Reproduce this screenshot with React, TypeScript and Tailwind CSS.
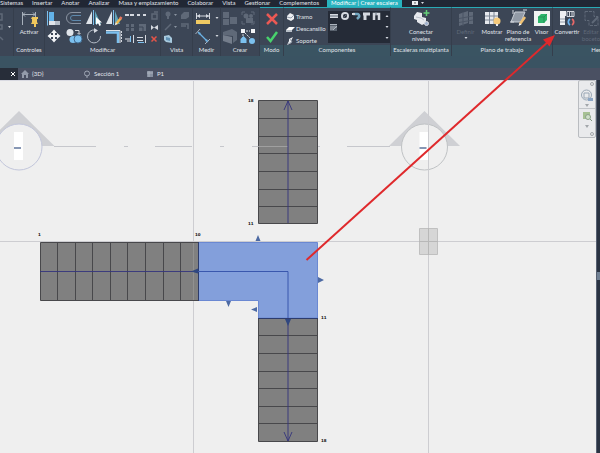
import type { ReactNode } from 'react'

const TABS = ['Insertar', 'Anotar', 'Analizar', 'Masa y emplazamiento', 'Colaborar', 'Vista', 'Gestionar', 'Complementos']

const W = '#d5d9e0'
const DIM = '#5f6978'
const BLUE = '#7cc0ee'
const INK = '#34347c'

function Svg({ w = 18, h = 18, children }: { w?: number; h?: number; children: ReactNode }) {
  return <svg width={w} height={h} viewBox={`0 0 ${w} ${h}`} fill="none" className="block shrink-0" aria-hidden="true">{children}</svg>
}

function Caret({ dim = false, up = false }: { dim?: boolean; up?: boolean }) {
  return <Svg w={4} h={4}><path d={up ? 'M.5 3h3L2 1z' : 'M.5 1h3L2 3z'} fill={dim ? DIM : W} /></Svg>
}

const MODIFY: Record<string, ReactNode> = {
  Alinear: <Svg><path d="M4 3h5v9H4z" fill="#62b2e8" /><path d="M4 12h11v4H4z" fill="#dfe4ea" /><path d="M10 12h5v4h-5z" fill="#b4bdc8" /><path d="M2.500 2v14.500" stroke={BLUE} /></Svg>,
  Desfase: <Svg><path d="M16 3.500H7a5.500 5.500 0 0 0 0 11h9" stroke="#8b94a2" /><path d="M16 6.500H8a2.500 2.500 0 0 0 0 5h8" stroke="#5e89ad" /></Svg>,
  'Reflejar eje': <Svg><path d="M7 2v13H1z" fill="#dfe4ea" /><path d="M10 2v13h6z" fill="#5fa3b8" /><path d="M8.500 1v15" stroke={BLUE} /><path d="M11 8v8l2-2 1.500 3 1.500-1-1.500-2.500H17z" fill="#fff" /></Svg>,
  'Reflejar dibujo': <Svg><path d="M7 2v13H1z" fill="#dfe4ea" /><path d="M10 2v13h5z" fill="#5fa3b8" /><path d="M8.500 1v15" stroke={BLUE} /><path d="m11 15 5-6" stroke="#eeb94e" strokeWidth="2.500" /><path d="m15 10 1.500-2" stroke="#e87561" strokeWidth="2.500" /><path d="m9.500 16.500 1.500-3 1.500 1.500z" fill="#eee" /></Svg>,
  Mover: <Svg><path d="M9 2.500 6 6h2v2H6V6L2.500 9 6 12v-2h2v2H6l3 3.500 3-3.500h-2v-2h2v2l3.500-3L12 6v2h-2V6h2z" fill="#f2f4f7" /></Svg>,
  Copiar: <Svg><circle cx="5" cy="5.500" r="3.500" fill="#dfe4ea" /><path d="M10 3.500h4V7m-1.500-1L14 7.500 15.500 6" stroke={W} /><circle cx="8" cy="12.500" r="3.500" fill={BLUE} /><circle cx="13" cy="12" r="4" fill={BLUE} stroke="#416b91" /></Svg>,
  Rotar: <Svg><path d="M10 3a6.500 6.500 0 1 0 5.500 6" stroke="#b4bcc7" /><path d="m9 1 4 2.500L9 6z" fill={W} /></Svg>,
  Recortar: <Svg><path d="M1 5.500h12V16" stroke={BLUE} strokeWidth="2.500" /><path d="M1 3.500h14V16" stroke="#dfe4ea" /><path d="M16.500 4v12" stroke={W} strokeDasharray="2 1" /></Svg>,
}

const SMALL: [string, ReactNode][] = [
  ['Dividir', <><path d="M1 6h4m1 0h4" stroke={W} strokeWidth="2" /></>],
  ['Dividir con hueco', <><path d="M1 6h3m3 0h3" stroke={W} strokeWidth="2" /></>],
  ['Desbloquear', <><path d="M4 5h5v5H4zM6 3h4" stroke={DIM} strokeWidth="1.500" /></>],
  ['Matriz', <><path d="M2 3h3v3H2zm5 0h3v3H7zM2 7h3v3H2zm5 0h3v3H7z" fill={DIM} /></>],
  ['Escala', <><path d="M3 3h7v7H3z" fill={DIM} /><path d="M3 6h4v4" stroke="#3c4656" /></>],
  ['Bloquear', <><path d="M3 4v5l3-2.500zM10 4v5L6 6.500z" fill={W} /></>],
  ['Alargar uno', <><path d="M1 6h5M3 8h4M9.500 2v8" stroke={W} /><path d="M6.500 3v6" stroke={BLUE} /></>],
  ['Alargar varios', <><path d="M1 4.500h6M1 7.500h6M9.500 2v8" stroke={W} /><path d="M2 9.500h6" stroke={BLUE} /></>],
  ['Suprimir', <><path d="m3.500 3.500 5 5m0-5-5 5" stroke="#e45449" strokeWidth="1.500" /></>],
]

function Panel({ label, className, context = false, children }: { label: string; className: string; context?: boolean; children: ReactNode }) {
  return (
    <section className={`flex flex-col border-r border-[#353e4c] ${context ? 'border-t border-t-[#29a9b4]' : 'border-t border-t-[#2c3543]'} ${className}`}>
      <div className="flex h-[37px] pt-px">{children}</div>
      <h2 className={`h-[11px] text-center leading-[10px] ${context ? 'bg-[#3a5462]' : ''}`}>{label}</h2>
    </section>
  )
}

function Tool({ lines, className, dim = false, children }: { lines: string[]; className: string; dim?: boolean; children: ReactNode }) {
  return (
    <button type="button" className={`flex shrink-0 flex-col items-center leading-[7px] ${dim ? 'text-[#5f6978]' : ''} ${className}`}>
      {children}
      <span className="flex flex-col items-center pt-px">
        {lines.map((l) => <span key={l} className="whitespace-nowrap">{l}</span>)}
      </span>
    </button>
  )
}

function Ribbon() {
  return (
    <div className="flex overflow-hidden bg-[#3c4656]">
      <div className="w-[14px] shrink-0 border-r border-t border-[#353e4c] border-t-[#2c3543] pt-1">
        <Svg w={12} h={34}><path d="M0 2h2v6H0m0 5h2v4H0m0 8 3 3" stroke={DIM} strokeWidth="1.500" /><path d="M8 14h3l-1.500 2z" fill={W} /></Svg>
      </div>
      <Panel label="Controles" className="w-[31px] shrink-0">
        <Tool lines={['Activar']} className="w-[30px]">
          <Svg><path d="M2.500 3v13M15.500 3v5M3 5.500h12M5 3.500l-2 2 2 2m8-4 2 2-2 2" stroke="#a7b0bb" /><path d="M12 8h6v2h-1v3l1 2h-7l1-2v-3h-1zM14 15h2v3h-2z" fill="#efc75c" /></Svg>
        </Tool>
      </Panel>
      <Panel label="Modificar" className="w-[116px] shrink-0">
        <div className="grid grid-cols-4 content-start gap-x-px">
          {Object.entries(MODIFY).map(([k, icon]) => <button key={k} type="button" aria-label={k} className="w-[19px]">{icon}</button>)}
        </div>
        <div className="grid grid-cols-3 content-start">
          {SMALL.map(([k, icon]) => <button key={k} type="button" aria-label={k}><Svg w={12} h={12}>{icon}</Svg></button>)}
        </div>
      </Panel>
      <Panel label="Vista" className="w-[32px] shrink-0">
        <button type="button" aria-label="Opciones de vista" className="self-start">
          <Svg w={31} h={36}>
            <circle cx="7" cy="5" r="2.500" fill={DIM} /><path d="M6 7h2v3H6z" fill={DIM} /><path d="M13 5h3l-1.500 2zM13 17h3l-1.500 2z" fill="#8a93a0" />
            <path d="m20 6 3-3h5v5l-3 2h-5z" fill={DIM} /><path d="m4 21 6-6M20 15h7v5m-7-3h5" stroke={DIM} strokeWidth="1.500" />
            <path d="m3 27 5-1 3 3v5l-6-1-2-2z" fill="#a7c9de" /><path d="m5 28 4 1v3l-4-1z" fill="#5f91b4" />
          </Svg>
        </button>
      </Panel>
      <Panel label="Medir" className="w-[28px] shrink-0">
        <div className="flex flex-col">
          <button type="button" aria-label="Medir distancia" className="flex items-center gap-[3px] pl-px">
            <Svg><path d="M2.500 4v6m13-6v6M3 7h12" stroke={W} /><path d="m6 5-3 2 3 2zm6 0 3 2-3 2z" fill={W} /><path d="M2 11h14v4H2z" fill="#f0ca62" /></Svg><Caret />
          </button>
          <button type="button" aria-label="Cota alineada" className="flex items-center gap-[3px] pl-px">
            <Svg><path d="m4 5 10 10" stroke="#6cb2e4" strokeWidth="1.200" /><path d="M1.500 7 6 2m5 15 5-5" stroke="#a9b2bd" /><path d="m4 5 3 1-2 2zm10 10-3-1 2-2z" fill="#6cb2e4" /></Svg><Caret />
          </button>
        </div>
      </Panel>
      <Panel label="Crear" className="w-[39px] shrink-0">
        <div className="grid grid-cols-2 content-start">
          <button type="button" aria-label="Crear ensamblaje"><Svg><path d="M2 3h6v6H2zM2 10h6v6H2zM9 8h7v7H9z" fill={DIM} /></Svg></button>
          <button type="button" aria-label="Crear piezas"><Svg><path d="M3 6V3h3m6 0h3v3m0 6v3h-3m-6 0H3v-3" stroke={DIM} /><circle cx="7" cy="7" r="2.500" fill={DIM} /><path d="M7 9h7v5H7z" fill={DIM} /><circle cx="12" cy="7" r="2" fill={DIM} /></Svg></button>
          <button type="button" aria-label="Crear grupo"><Svg><path d="m2 5 9-3 5 3v8l-4 3V9L2 8z" fill={DIM} /><path d="m2 8 9 2v7l-9-3z" fill="#747d8b" /></Svg></button>
          <button type="button" aria-label="Crear similar"><Svg><path d="M2 2h4v4H2zM12 2h4v4h-4z" fill="#f2f4f7" /><path d="M7 4h4M6 6l5 5M4 7v4" stroke={W} strokeDasharray="2 1" /><path d="m4.500 9 3 3v4h-6v-4z" fill={BLUE} /><circle cx="13" cy="14" r="3" fill={BLUE} /></Svg></button>
        </div>
      </Panel>
      <Panel label="Modo" context className="w-[24px] shrink-0">
        <div className="flex flex-col pl-[3px]">
          <button type="button" aria-label="Cancelar"><Svg><path d="m4 5 10 10m0-10L4 15" stroke="#ec5954" strokeWidth="2.500" /></Svg></button>
          <button type="button" aria-label="Finalizar"><Svg><path d="m4 10 3.500 4L14 5" stroke="#48d26d" strokeWidth="2.500" /></Svg></button>
        </div>
      </Panel>
      <Panel label="Componentes" context className="w-[107px] shrink-0">
        <div className="flex w-[44px] shrink-0 flex-col pl-px text-left">
          <button type="button" className="flex h-3 items-center gap-px pt-[3px]"><Svg w={10} h={10}><path d="M2 4 5 1l4 2v4L6 9 2 7z" fill="#eef0f3" /><path d="m2 5 4 1 3-3" stroke="#929cab" /></Svg>Tramo</button>
          <button type="button" className="flex h-3 items-center gap-px pt-[3px]"><Svg w={10} h={10}><path d="m1 6 3-3h6L7 6z" fill="#fff" /><path d="M1 6h6v2H1z" fill="#b7bec7" /></Svg>Descansillo</button>
          <button type="button" className="flex h-3 items-center gap-px pt-[3px]"><Svg w={10} h={10}><path d="M8 1 4 3v2L2 9l4-2V5z" fill="#eef0f3" /><path d="m5 3 2 3-4 2" stroke="#9ca6b3" /></Svg>Soporte</button>
        </div>
        <div className="mt-[2px] flex h-8 w-[62px] justify-between bg-[#252b37] pr-px">
          <Svg w={54} h={20}>
            <path d="M2 3h8v4H2z" fill={W} /><path d="M2 5h8" stroke="#5f6876" />
            <circle cx="17" cy="5" r="3" stroke={W} strokeWidth="2" /><path d="m15 7 4-4" stroke="#5f6876" />
            <path d="M25 3h4a2 2 0 0 1 2 3l-2 2" stroke="#71a5bf" strokeWidth="2.500" /><path d="M24 3h3" stroke={W} strokeWidth="2" />
            <path d="M35 3h7M37 2v7" stroke={W} strokeWidth="3" /><path d="M46 9V3h5v6" stroke={W} strokeWidth="2.500" /><path d="M48 1v3" stroke="#65707f" />
            <path d="M2 13h7v7H2z" fill="#58616d" /><path d="M2 13.500h7M2 16h7M2 18h4m-1 1 4-4" stroke="#aeb5bf" />
          </Svg>
          <div className="flex flex-col justify-between py-[3px]"><Caret up /><Caret /><Caret /></div>
        </div>
      </Panel>
      <Panel label="Escaleras multiplanta" context className="w-[61px] shrink-0">
        <Tool lines={['Conectar', 'niveles']} className="w-[60px]">
          <Svg><path d="m2 7 3-4 5 1v4l4 1v5l-4 2-5-3v-2l-3-1z" fill="#e6e9ee" /><path d="m4 8 5 1 3 2" stroke="#bac1cb" /><path d="M14.500 1v6m-3-3h6" stroke="#65d17a" strokeWidth="1.500" /><circle cx="14.500" cy="14.500" r="2" fill="#9eb1cf" stroke={W} /></Svg>
        </Tool>
      </Panel>
      <Panel label="Plano de trabajo" context className="w-[101px] shrink-0">
        <Tool dim lines={['Definir']} className="w-[27px]">
          <Svg><path d="m2 5 9-3v12l-9 3zM12 3h4v12h-4z" fill={DIM} /><path d="M2 9.500 16 7M2 13.500 16 11M6 3v14" stroke="#4b5565" /></Svg>
          <span className="order-last pt-px"><Caret /></span>
        </Tool>
        <Tool lines={['Mostrar']} className="w-[26px]">
          <Svg><path d="M2 3h13v12H2z" fill="#e6e9ee" /><path d="M2 7h13M2 11h13M6.500 3v12M11 3v12" stroke="#7e8896" /><circle cx="14" cy="12" r="3.500" fill="#f6ca7b" /><path d="M13 15h2v2h-2z" fill="#e6e9ee" /></Svg>
        </Tool>
        <Tool lines={['Plano de', 'referencia']} className="w-[26px]">
          <Svg><path d="M6 3h10l-4 10H2z" fill="#929ba7" stroke="#c8ced6" /><path d="m11 15 5-7" stroke="#f0c274" strokeWidth="2.500" /><path d="m9.500 17 1-3 2 1.500z" fill="#fff" /><path d="M4 1v4M1 13h4M14 1h4" stroke={W} /></Svg>
        </Tool>
        <Tool lines={['Visor']} className="w-[21px]">
          <Svg><path d="M1 2h16v15H1z" fill="#f0f4f2" /><path d="m5 8 3-3h6v6l-3 3H5z" fill="#2db56b" /><path d="M5 8h6v6m0-6 3-3" stroke="#239559" /></Svg>
        </Tool>
      </Panel>
      <Panel label="Her" context className="min-w-[48px] flex-1 border-r-0 *:last:text-right">
        <Tool lines={['Convertir']} className="w-[28px]">
          <Svg><path d="M2 2h6v5H2zM2 7h5v9H2z" fill="#eef0f3" /><path d="M2 10h5M2 13h5" stroke="#8e98a5" /><path d="M9 2.500h7v5H9zm2.500 0v5m2.500-5v5" stroke={W} /><path d="M12 10a3.500 3.500 0 0 0 0 6" stroke="#6eb5f0" strokeWidth="1.800" /><path d="M14 10a3.500 3.500 0 0 1 0 6" stroke="#e66868" strokeWidth="1.800" /></Svg>
        </Tool>
        <Tool dim lines={['Editar', 'boceto']} className="w-[20px]">
          <Svg><path d="M3 2.500h9v5h4v9H7v-5H3z" stroke={DIM} strokeDasharray="3 1" /><path d="m10 14 6-6" stroke={DIM} strokeWidth="2" /></Svg>
        </Tool>
      </Panel>
    </div>
  )
}

function DocTabs() {
  return (
    <nav className="flex h-3 items-center bg-[#4a5062] leading-[12px]">
      <button type="button" aria-label="Cerrar vista" className="flex h-3 w-[18px] shrink-0 items-center justify-end bg-[#272d39] pr-[2px]"><Svg w={6} h={6}><path d="m1 1 4 4m0-4L1 5" stroke="#fff" /></Svg></button>
      <a href="#3d" className="flex w-[64px] shrink-0 items-center gap-[3px] pl-[3px]"><Svg w={8} h={8}><path d="m0 4 4-4 4 4H7v4H5V5H3v3H1V4z" fill="#939baa" /></Svg>{'{3D}'}</a>
      <a href="#seccion" className="flex w-[64px] shrink-0 items-center gap-[3px] pl-px"><Svg w={8} h={8}><circle cx="4" cy="3.500" r="2.500" stroke="#a0a7b5" /><path d="M4 6v2" stroke="#a0a7b5" /></Svg>Sección 1</a>
      <a href="#p1" className="flex items-center gap-[3px]"><Svg w={8} h={8}><path d="M1 1h6v6H1z" fill="#8790a0" /><path d="M1 3h6M3 1v6" stroke="#a9b0bc" /></Svg>P1</a>
    </nav>
  )
}

function SectionHead({ x, stroke }: { x: number; stroke: string }) {
  return (
    <g transform={`translate(${x} 67)`}>
      <path d="M0-36 35.500-1h-71z" fill="#cfd0d4" />
      <circle r="23" fill="#efefef" stroke={stroke} />
      <path d="M-5-15h9v28h-9z" fill="#fff" />
      <path d="M-5 1h7" stroke="#8797b4" strokeWidth="2" />
    </g>
  )
}

const UP_TREADS = [38.5, 56.5, 73.5, 91.5, 109.5, 126.5]
const LEFT_TREADS = [57.5, 75.5, 92.5, 110.5, 127.5, 145.5, 163.5, 180.5]
const DOWN_TREADS = [255.5, 273.5, 291.5, 308.5, 326.5, 343.5]

function Plan() {
  return (
    <svg className="absolute inset-0 h-full w-full" fill="none" role="img" aria-label="Planta de escalera">
      <path d="M0 161.500h2000M193.500 0v2000M428.500 0v2000" stroke="#cdcdd1" />
      <path d="M0 .5h2000" stroke="#d9dae2" />
      <path d="M54 66.500h42m28 0h4m27 0h37m28 0h4m28 0h6m60 0h2m27 0h43" stroke="#c6c7cc" />
      <SectionHead x={19} stroke="#c2c6db" />
      <SectionHead x={424.5} stroke="#bfc2c4" />
      <path d="M428.500 31v60" stroke="#cdcdd1" />
      <path d="M419.500 148.500h18v26h-18z" fill="#d0d0d0" fillOpacity=".8" stroke="#c0c0c0" />
      <path d="M419 161.500h19M428.500 148v27" stroke="#b8b8b8" />

      <g fill="#808080" stroke="#48484b">
        <path d="M258.500 20.500h59v123h-59z" />
        <path d="M40.500 162.500h158v58h-158z" />
        <path d="M258.500 238.500h59v123h-59z" />
        {UP_TREADS.map((y) => <path key={y} d={`M258 ${y}h59`} />)}
        {LEFT_TREADS.map((x) => <path key={x} d={`M${x} 162v58`} />)}
        {DOWN_TREADS.map((y) => <path key={y} d={`M258 ${y}h59`} />)}
      </g>
      <path d="M258 66.500h30" stroke="#a0a0a0" />
      <path d="M193.500 163v57" stroke="#919191" />
      <path d="M198.500 162.500h119v75.500h-59v-17.500h-60z" fill="#839fdb" stroke="#6a88d2" />
      <path d="M198.500 162v59M258 238.500h60" stroke="#2d3c6c" />
      <path d="M288 143V21m-4 9 4-9 4 9M288 238v123m-4-9 4 9 4-9M40 191.500h158" stroke={INK} strokeOpacity=".9" />
      <path d="M198 191.500h90V238" stroke="#3957ad" />
      <g fill="#30477f">
        <path d="m191 191.500 7-3v5zM285 239h6l-3 7z" />
        <path d="m258 155 2.500 6h-5zM226 221h5l-2.500 6zM251 229.500l6-2.500v5zM318 197l6 3-6 3z" fill="#4d6aa3" />
      </g>
      <g fill="#111" className="font-['DejaVu_Sans',sans-serif] text-[4px] font-bold">
        <text x="38" y="156">1</text>
        <text x="195" y="156">10</text>
        <text x="248" y="22">18</text>
        <text x="248" y="145">11</text>
        <text x="321" y="239">11</text>
        <text x="321" y="362">18</text>
      </g>
    </svg>
  )
}

function NavBar() {
  return (
    <div className="absolute right-1 top-0 flex w-[18px] flex-col items-center rounded-[2px] border border-[#b9bcc0] bg-[#e9eaec]">
      <button type="button" aria-label="Cerrar barra" className="self-end"><Svg w={6} h={6}><circle cx="3" cy="3" r="1.500" stroke="#a2a6aa" /></Svg></button>
      <button type="button" aria-label="Rueda de navegación"><Svg w={14} h={16}><circle cx="6.500" cy="8" r="5" stroke="#9aa7b5" /><path d="M4 6h5v5H4z" stroke="#9aa7b5" /><path d="M8 11h5v3H8z" fill="#8ba5c4" /></Svg></button>
      <Svg w={6} h={5}><path d="M1 1h4L3 4z" fill="#a2a6aa" /></Svg>
      <div className="w-full border-t border-[#c2c5c9]" />
      <button type="button" aria-label="Zoom"><Svg w={14} h={14}><path d="M3 3h7v7H3z" fill="#a6c193" /><circle cx="8" cy="8" r="2.500" fill="#cfdfc9" stroke="#8ba189" /><path d="m10 10 2 2" stroke="#7e947d" /></Svg></button>
      <Svg w={6} h={6}><path d="M1 2h4L3 5z" fill="#a2a6aa" /></Svg>
      <button type="button" aria-label="Opciones de barra" className="self-end pt-0.5"><Svg w={6} h={6}><circle cx="3" cy="3" r="1.500" stroke="#a2a6aa" /></Svg></button>
    </div>
  )
}

export default function App() {
  return (
    <div className="relative flex min-h-screen flex-col overflow-hidden bg-[#3a5362] font-['Lato','Noto_Sans',sans-serif] text-[6px] text-[#e0e4ea]">
      <nav className="flex h-[7px] items-start gap-[9px] overflow-hidden whitespace-nowrap bg-[#212734] leading-[5px]">
        <a href="#sistemas">Sistemas</a>
        {TABS.map((t) => <a key={t} href={`#${t}`}>{t}</a>)}
        <a href="#modificar" className="-ml-px h-[7px] bg-[#27b3bf] px-1 text-white">Modificar | Crear escalera</a>
        <button type="button" aria-label="Minimizar cinta"><Svg w={14} h={6}><path d="M1 1h6v4H1z" fill="#eef0f3" /><path d="M3 2.500h2L4 4z" fill="#333" /><path d="M10 2h3l-1.500 2z" fill={W} /></Svg></button>
      </nav>
      <Ribbon />
      <div className="h-3 bg-[#3a5362]" />
      <DocTabs />
      <main className="relative flex-1 bg-[#efefef]">
        <Plan />
        <NavBar />
        <div className="absolute inset-y-0 right-0 w-1 border-l border-[#566071] bg-[#2a3342]">
          <div className="mt-48 h-2 w-[3px] bg-[#718194]" />
        </div>
      </main>
      <svg className="pointer-events-none absolute inset-0 h-full w-full" fill="none" aria-hidden="true">
        <path d="M306.500 260 549 41" stroke="#df292c" strokeWidth="2" />
        <path d="m555 35-5.500 11.500-6.500-7z" fill="#df292c" />
      </svg>
    </div>
  )
}
